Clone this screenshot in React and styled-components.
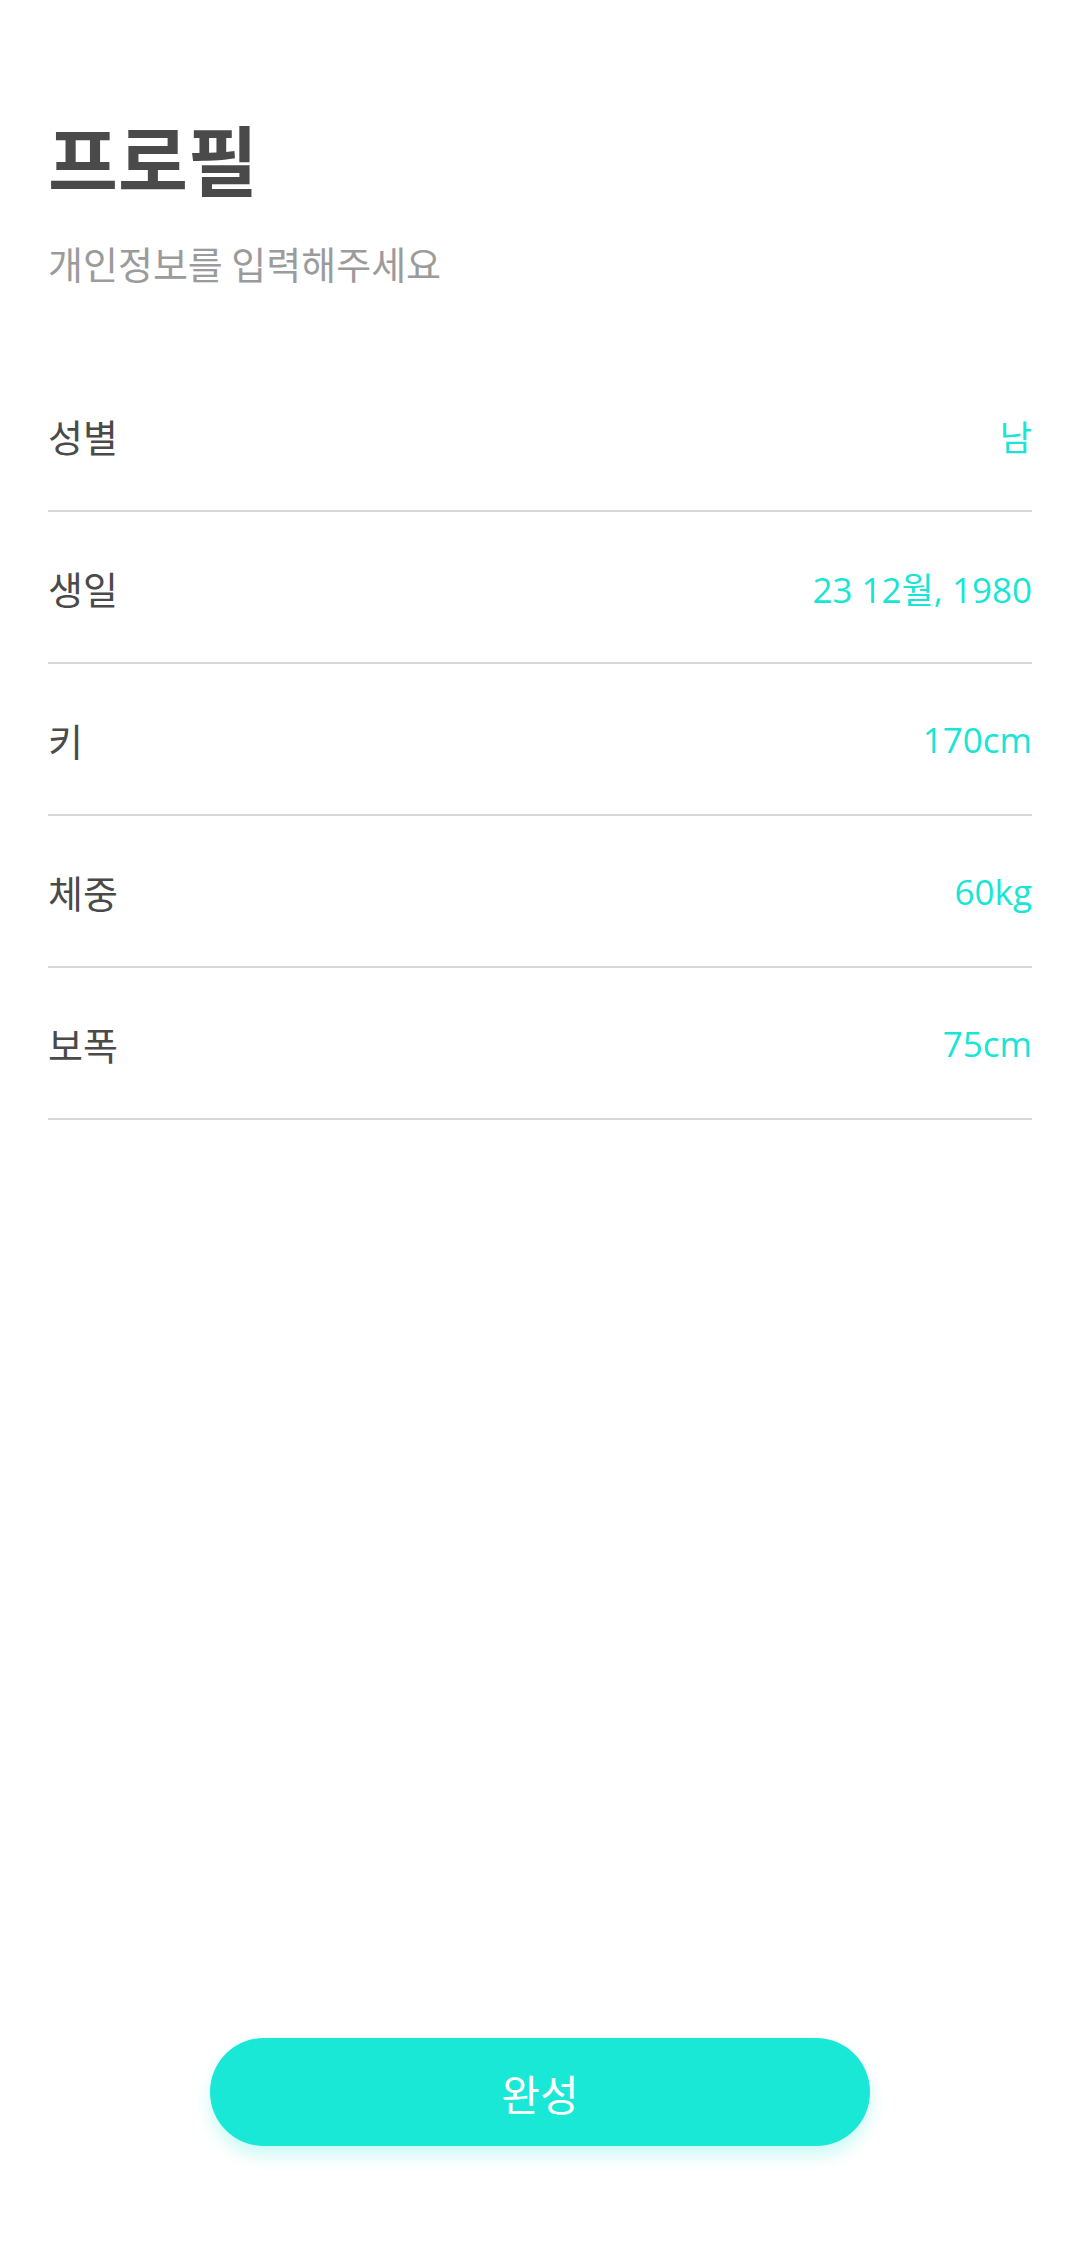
import React from "react";
import styled, { createGlobalStyle } from "styled-components";

const Global = createGlobalStyle`
  html, body { margin: 0; padding: 0; background: #ffffff; }
  body { font-family: "Noto Sans CJK KR", "Noto Sans", sans-serif; }
  #root { min-height: 100vh; }
`;

const Page = styled.div`
  min-height: 100vh;
  display: flex;
  flex-direction: column;
  box-sizing: border-box;
  padding: 0 48px 113px;
  background: #fff;
`;

const Header = styled.header`
  padding-top: 119px;
  display: flex;
  flex-direction: column;
`;

const Title = styled.h1`
  margin: 0;
  font-family: "Noto Sans CJK KR", sans-serif;
  font-weight: 700;
  font-size: 76px;
  line-height: 1;
  color: #4a4a4a;
`;

const Subtitle = styled.p`
  margin: 49px 0 0;
  font-family: "Noto Sans CJK KR", sans-serif;
  font-weight: 400;
  font-size: 38px;
  line-height: 1;
  color: #9b9b9b;
`;

const List = styled.div`
  margin-top: 78px;
  display: flex;
  flex-direction: column;
`;

const Row = styled.div`
  height: 150px;
  border-bottom: 2px solid #d7d7d7;
  display: flex;
  align-items: center;
  justify-content: space-between;
`;

const Label = styled.span`
  font-family: "Noto Sans CJK KR", sans-serif;
  font-size: 38px;
  color: #4a4a4a;
`;

const Value = styled.span`
  font-family: "Open Sans", "Noto Sans CJK KR", sans-serif;
  font-size: 35px;
  color: #17e6d4;
`;

const Footer = styled.div`
  margin-top: auto;
  display: flex;
  justify-content: center;
`;

const DoneButton = styled.button`
  width: 660px;
  height: 108px;
  border: none;
  border-radius: 54px;
  background: #19e8d6;
  color: #ffffff;
  font-family: "Noto Sans CJK KR", sans-serif;
  font-size: 42px;
  box-shadow: 0 10px 16px rgba(25, 232, 214, 0.22);
  cursor: pointer;
`;

const rows = [
  ["성별", "남"],
  ["생일", "23 12월, 1980"],
  ["키", "170cm"],
  ["체중", "60kg"],
  ["보폭", "75cm"],
];

export default function App() {
  return (
    <>
      <Global />
      <Page>
        <Header>
          <Title>프로필</Title>
          <Subtitle>개인정보를 입력해주세요</Subtitle>
        </Header>
        <List>
          {rows.map(([k, v]) => (
            <Row key={k}>
              <Label>{k}</Label>
              <Value>{v}</Value>
            </Row>
          ))}
        </List>
        <Footer>
          <DoneButton>완성</DoneButton>
        </Footer>
      </Page>
    </>
  );
}
